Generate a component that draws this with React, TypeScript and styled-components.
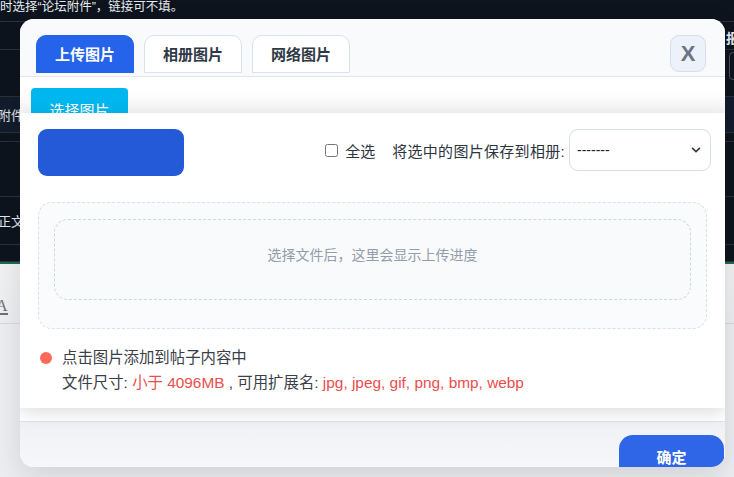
import React from "react";
import styled, { createGlobalStyle } from "styled-components";
import { FaChevronDown } from "react-icons/fa";

const GlobalStyle = createGlobalStyle`
  html, body {
    margin: 0;
    padding: 0;
    background: #eceef1;
  }
  * {
    box-sizing: border-box;
  }
  body {
    font-family: "Liberation Sans", "Noto Sans CJK SC", sans-serif;
  }
`;

const tabs = ["上传图片", "相册图片", "网络图片"];

export default function App() {
  return (
    <>
      <GlobalStyle />
      <Page>
        <DarkArea>
          <DarkRow $h={22}>
            <TopNote>时选择“论坛附件”，链接可不填。</TopNote>
          </DarkRow>
          <DarkRow $h={28}>
            <span />
            <SideLabel>报</SideLabel>
          </DarkRow>
          <DarkRow $h={47}>
            <span />
            <SideInput />
          </DarkRow>
          <DarkRow $h={36} $band>
            <RowText>附件:</RowText>
          </DarkRow>
          <DarkRow $h={9} />
          <DarkRow $h={55} />
          <DarkRow $h={48}>
            <RowText>正文</RowText>
          </DarkRow>
          <DarkRow $h={17} />
        </DarkArea>
        <EditorBar>
          <FontIcon>A</FontIcon>
        </EditorBar>

        {/* 弹窗 */}
        <Modal>
          <Header>
            <Tabs>
              {tabs.map((t, i) => (
                <Tab key={t} $active={i === 0}>
                  {t}
                </Tab>
              ))}
            </Tabs>
            <CloseButton>X</CloseButton>
          </Header>

          <Toolbar>
            <PickButton>选择图片</PickButton>
          </Toolbar>

          <Panel>
            <TopRow>
              <UploadBlock />
              <SaveGroup>
                <CheckLabel>
                  <input type="checkbox" />
                  全选
                </CheckLabel>
                <SaveText>将选中的图片保存到相册:</SaveText>
                <AlbumSelect>
                  <span>-------</span>
                  <FaChevronDown className="chev" />
                </AlbumSelect>
              </SaveGroup>
            </TopRow>

            <DropOuter>
              <DropInner>选择文件后，这里会显示上传进度</DropInner>
            </DropOuter>

            <Notes>
              <NoteLine>
                <Dot />
                点击图片添加到帖子内容中
              </NoteLine>
              <NoteLine $indent>
                文件尺寸: <Red>小于 4096MB</Red> , 可用扩展名:{" "}
                <Red>jpg, jpeg, gif, png, bmp, webp</Red>
              </NoteLine>
            </Notes>
          </Panel>

          <Footer>
            <ConfirmButton>确定</ConfirmButton>
          </Footer>
        </Modal>
      </Page>
    </>
  );
}

const Page = styled.div`
  position: relative;
  width: 734px;
  height: 477px;
  overflow: hidden;
  background: #eceef1;
`;

// 뒤쪽 어두운 페이지
const DarkArea = styled.div`
  background: #0e141d;
  border-bottom: 2px solid #1f6b4f;
  display: flex;
  flex-direction: column;
`;

const DarkRow = styled.div<{ $h: number; $band?: boolean }>`
  height: ${(p) => p.$h}px;
  display: flex;
  justify-content: space-between;
  align-items: center;
  border-bottom: 1px solid #2a313b;
  background: ${(p) => (p.$band ? "#121c2d" : "transparent")};
  overflow: hidden;
`;

const TopNote = styled.div`
  color: #e8ecf2;
  font-size: 12.5px;
  line-height: 13px;
  margin-top: -7px;
  font-family: "Liberation Sans", "Noto Sans CJK SC", sans-serif;
`;

const RowText = styled.div`
  color: #e3e8ef;
  font-size: 13px;
  margin-left: -2px;
  font-family: "Noto Sans CJK SC", sans-serif;
`;

const SideLabel = styled.div`
  color: #e8ecf2;
  font-size: 13px;
  font-weight: 700;
  margin-top: 4px;
  margin-right: -5px;
  font-family: "Noto Sans CJK SC", sans-serif;
`;

const SideInput = styled.div`
  width: 40px;
  height: 28px;
  margin-right: -35px;
  margin-top: -15px;
  border: 1px solid #4a525d;
  border-radius: 4px;
`;

const EditorBar = styled.div`
  height: 60px;
  border-bottom: 1px solid #d6d9de;
  padding: 33px 0 0 0;
  background: linear-gradient(#f2f2f3, #eceef1);
`;

const FontIcon = styled.span`
  display: inline-block;
  margin-left: -4px;
  font-size: 16px;
  line-height: 14px;
  color: #6b6f76;
  font-family: "Liberation Serif", serif;
  border-bottom: 2px solid #6b6f76;
`;

const Modal = styled.div`
  position: absolute;
  left: 20px;
  top: 19px;
  width: 705px;
  height: 448px;
  border-radius: 14px;
  overflow: hidden;
  background: #ffffff;
  display: flex;
  flex-direction: column;
  box-shadow: 0 10px 30px rgba(0, 0, 0, 0.12);
  font-family: "Liberation Sans", "Noto Sans CJK SC", sans-serif;
`;

const Header = styled.div`
  height: 58px;
  flex-shrink: 0;
  display: flex;
  justify-content: space-between;
  align-items: flex-start;
  padding: 16px 19px 0 16px;
  background: #f8fafc;
  border-bottom: 1px solid #e1e6ee;
`;

const Tabs = styled.div`
  display: flex;
  gap: 10px;
`;

const Tab = styled.div<{ $active?: boolean }>`
  width: 98px;
  height: 38px;
  display: flex;
  align-items: center;
  justify-content: center;
  padding-bottom: 2px;
  border-radius: 10px 10px 0 0;
  font-size: 15px;
  font-weight: 700;
  color: ${(p) => (p.$active ? "#ffffff" : "#2f3846")};
  background: ${(p) => (p.$active ? "#2563eb" : "#ffffff")};
  border: 1px solid ${(p) => (p.$active ? "#2563eb" : "#d9e1ee")};
`;

const CloseButton = styled.div`
  width: 36px;
  height: 37px;
  display: flex;
  align-items: center;
  justify-content: center;
  border-radius: 9px;
  background: #edf1f9;
  border: 1px solid #d6deeb;
  color: #6b7384;
  font-size: 22px;
  font-weight: 700;
  font-family: "Liberation Sans", sans-serif;
`;

const Toolbar = styled.div`
  height: 36px;
  flex-shrink: 0;
  overflow: hidden;
  padding: 11px 0 0 11px;
  background: linear-gradient(#ffffff 40%, #f3f3f4);
`;

const PickButton = styled.div`
  width: 97px;
  height: 46px;
  line-height: 46px;
  border-radius: 4px;
  background: #00b6ee;
  color: #ffffff;
  text-align: center;
  font-size: 15px;
`;

const Panel = styled.div`
  position: relative;
  z-index: 1;
  height: 295px;
  flex-shrink: 0;
  background: #ffffff;
  padding: 16px 18px 0 18px;
  box-shadow: 0 5px 16px rgba(0, 0, 0, 0.13);
`;

const TopRow = styled.div`
  display: flex;
  justify-content: space-between;
  align-items: flex-start;
`;

const UploadBlock = styled.div`
  width: 146px;
  height: 47px;
  border-radius: 9px;
  background: #2459d8;
`;

const SaveGroup = styled.div`
  display: flex;
  align-items: center;
  margin-right: -4px;
  font-size: 15px;
  color: #2d3440;
`;

const CheckLabel = styled.label`
  display: flex;
  align-items: center;
  gap: 7px;
  margin-right: 17px;

  input {
    width: 13px;
    height: 13px;
    margin: 0;
  }
`;

const SaveText = styled.span`
  margin-right: 4px;
  letter-spacing: 0.3px;
`;

const AlbumSelect = styled.div`
  width: 142px;
  height: 42px;
  display: flex;
  align-items: center;
  justify-content: space-between;
  padding: 0 9px 0 7px;
  border: 1px solid #d5deeb;
  border-radius: 9px;
  font-size: 14px;
  color: #222;

  .chev {
    width: 10px;
    height: 10px;
    color: #333a46;
  }
`;

const DropOuter = styled.div`
  margin-top: 26px;
  height: 127px;
  padding: 16px 15px 28px 15px;
  border: 1px dashed #d7e0ec;
  border-radius: 14px;
  background: #fafbfd;
`;

const DropInner = styled.div`
  height: 81px;
  display: flex;
  align-items: center;
  justify-content: center;
  padding-bottom: 12px;
  border: 1px dashed #cdd7e4;
  border-radius: 14px;
  background: #f8fafc;
  color: #939ca8;
  font-size: 14px;
`;

const Notes = styled.div`
  margin-top: 16px;
  font-size: 15.4px;
  line-height: 25px;
  color: #3a4049;
`;

const NoteLine = styled.div<{ $indent?: boolean }>`
  display: flex;
  align-items: center;
  white-space: pre;
  padding-left: ${(p) => (p.$indent ? "24px" : "2px")};
`;

const Dot = styled.span`
  width: 12px;
  height: 12px;
  border-radius: 50%;
  background: #ff6a5b;
  margin-right: 10px;
`;

const Red = styled.span`
  color: #ec4c4c;
`;

const Footer = styled.div`
  flex: 1;
  display: flex;
  justify-content: flex-end;
  align-items: flex-start;
  margin-top: 13px;
  padding: 13px 1px 0 0;
  border-top: 1px solid #dde2e9;
  background: linear-gradient(#eff1f4, #f8f9fb);
`;

const ConfirmButton = styled.div`
  width: 105px;
  height: 46px;
  line-height: 46px;
  border-radius: 14px;
  background: #2f66e8;
  color: #ffffff;
  text-align: center;
  font-size: 15px;
  font-weight: 700;
`;
